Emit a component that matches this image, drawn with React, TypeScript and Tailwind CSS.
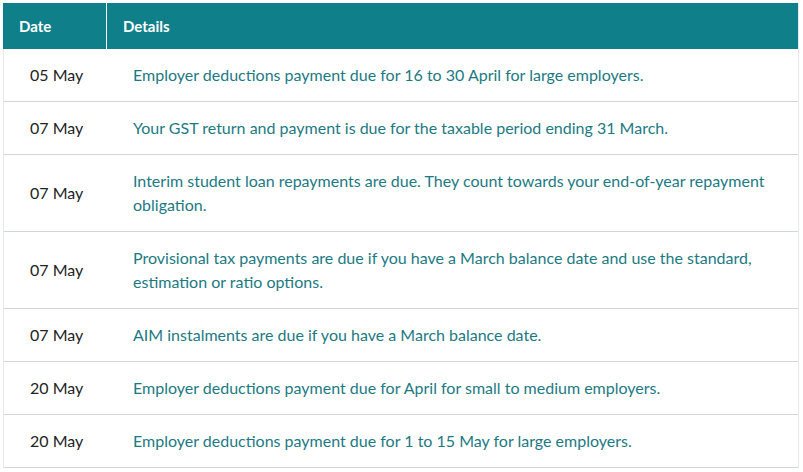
const rows = [
  { date: '05 May', text: 'Employer deductions payment due for 16 to 30 April for large employers.' },
  { date: '07 May', text: 'Your GST return and payment is due for the taxable period ending 31 March.' },
  {
    date: '07 May',
    text: 'Interim student loan repayments are due. They count towards your end-of-year repayment obligation.',
  },
  {
    date: '07 May',
    text: 'Provisional tax payments are due if you have a March balance date and use the standard, estimation or ratio options.',
  },
  { date: '07 May', text: 'AIM instalments are due if you have a March balance date.' },
  { date: '20 May', text: 'Employer deductions payment due for April for small to medium employers.' },
  { date: '20 May', text: 'Employer deductions payment due for 1 to 15 May for large employers.' },
];

export default function App() {
  return (
    <div className="h-[472px] w-[803px] overflow-hidden bg-white pt-[3px] pl-[3px] font-['Lato',sans-serif]">
      <div className="w-[796px] border-x border-[#e6e9ea]">
        <div className="-ml-px flex h-[46px] w-[795px] bg-[#0f7f89] text-[15px] font-bold text-white">
          <div className="flex w-[104px] items-center border-r border-white pl-[16px]">Date</div>
          <div className="flex flex-1 items-center pl-[16px]">Details</div>
        </div>
        {rows.map((row, i) => (
          <div key={i} className="flex border-b border-[#d3d6d7] text-[16px] leading-[24px]">
            <div className="flex w-[104px] shrink-0 items-center pl-[26px] text-[#232323]">{row.date}</div>
            <div className="flex-1 py-[14px] pl-[25px] pr-[22px] text-[#1c7a83]">{row.text}</div>
          </div>
        ))}
      </div>
    </div>
  );
}
